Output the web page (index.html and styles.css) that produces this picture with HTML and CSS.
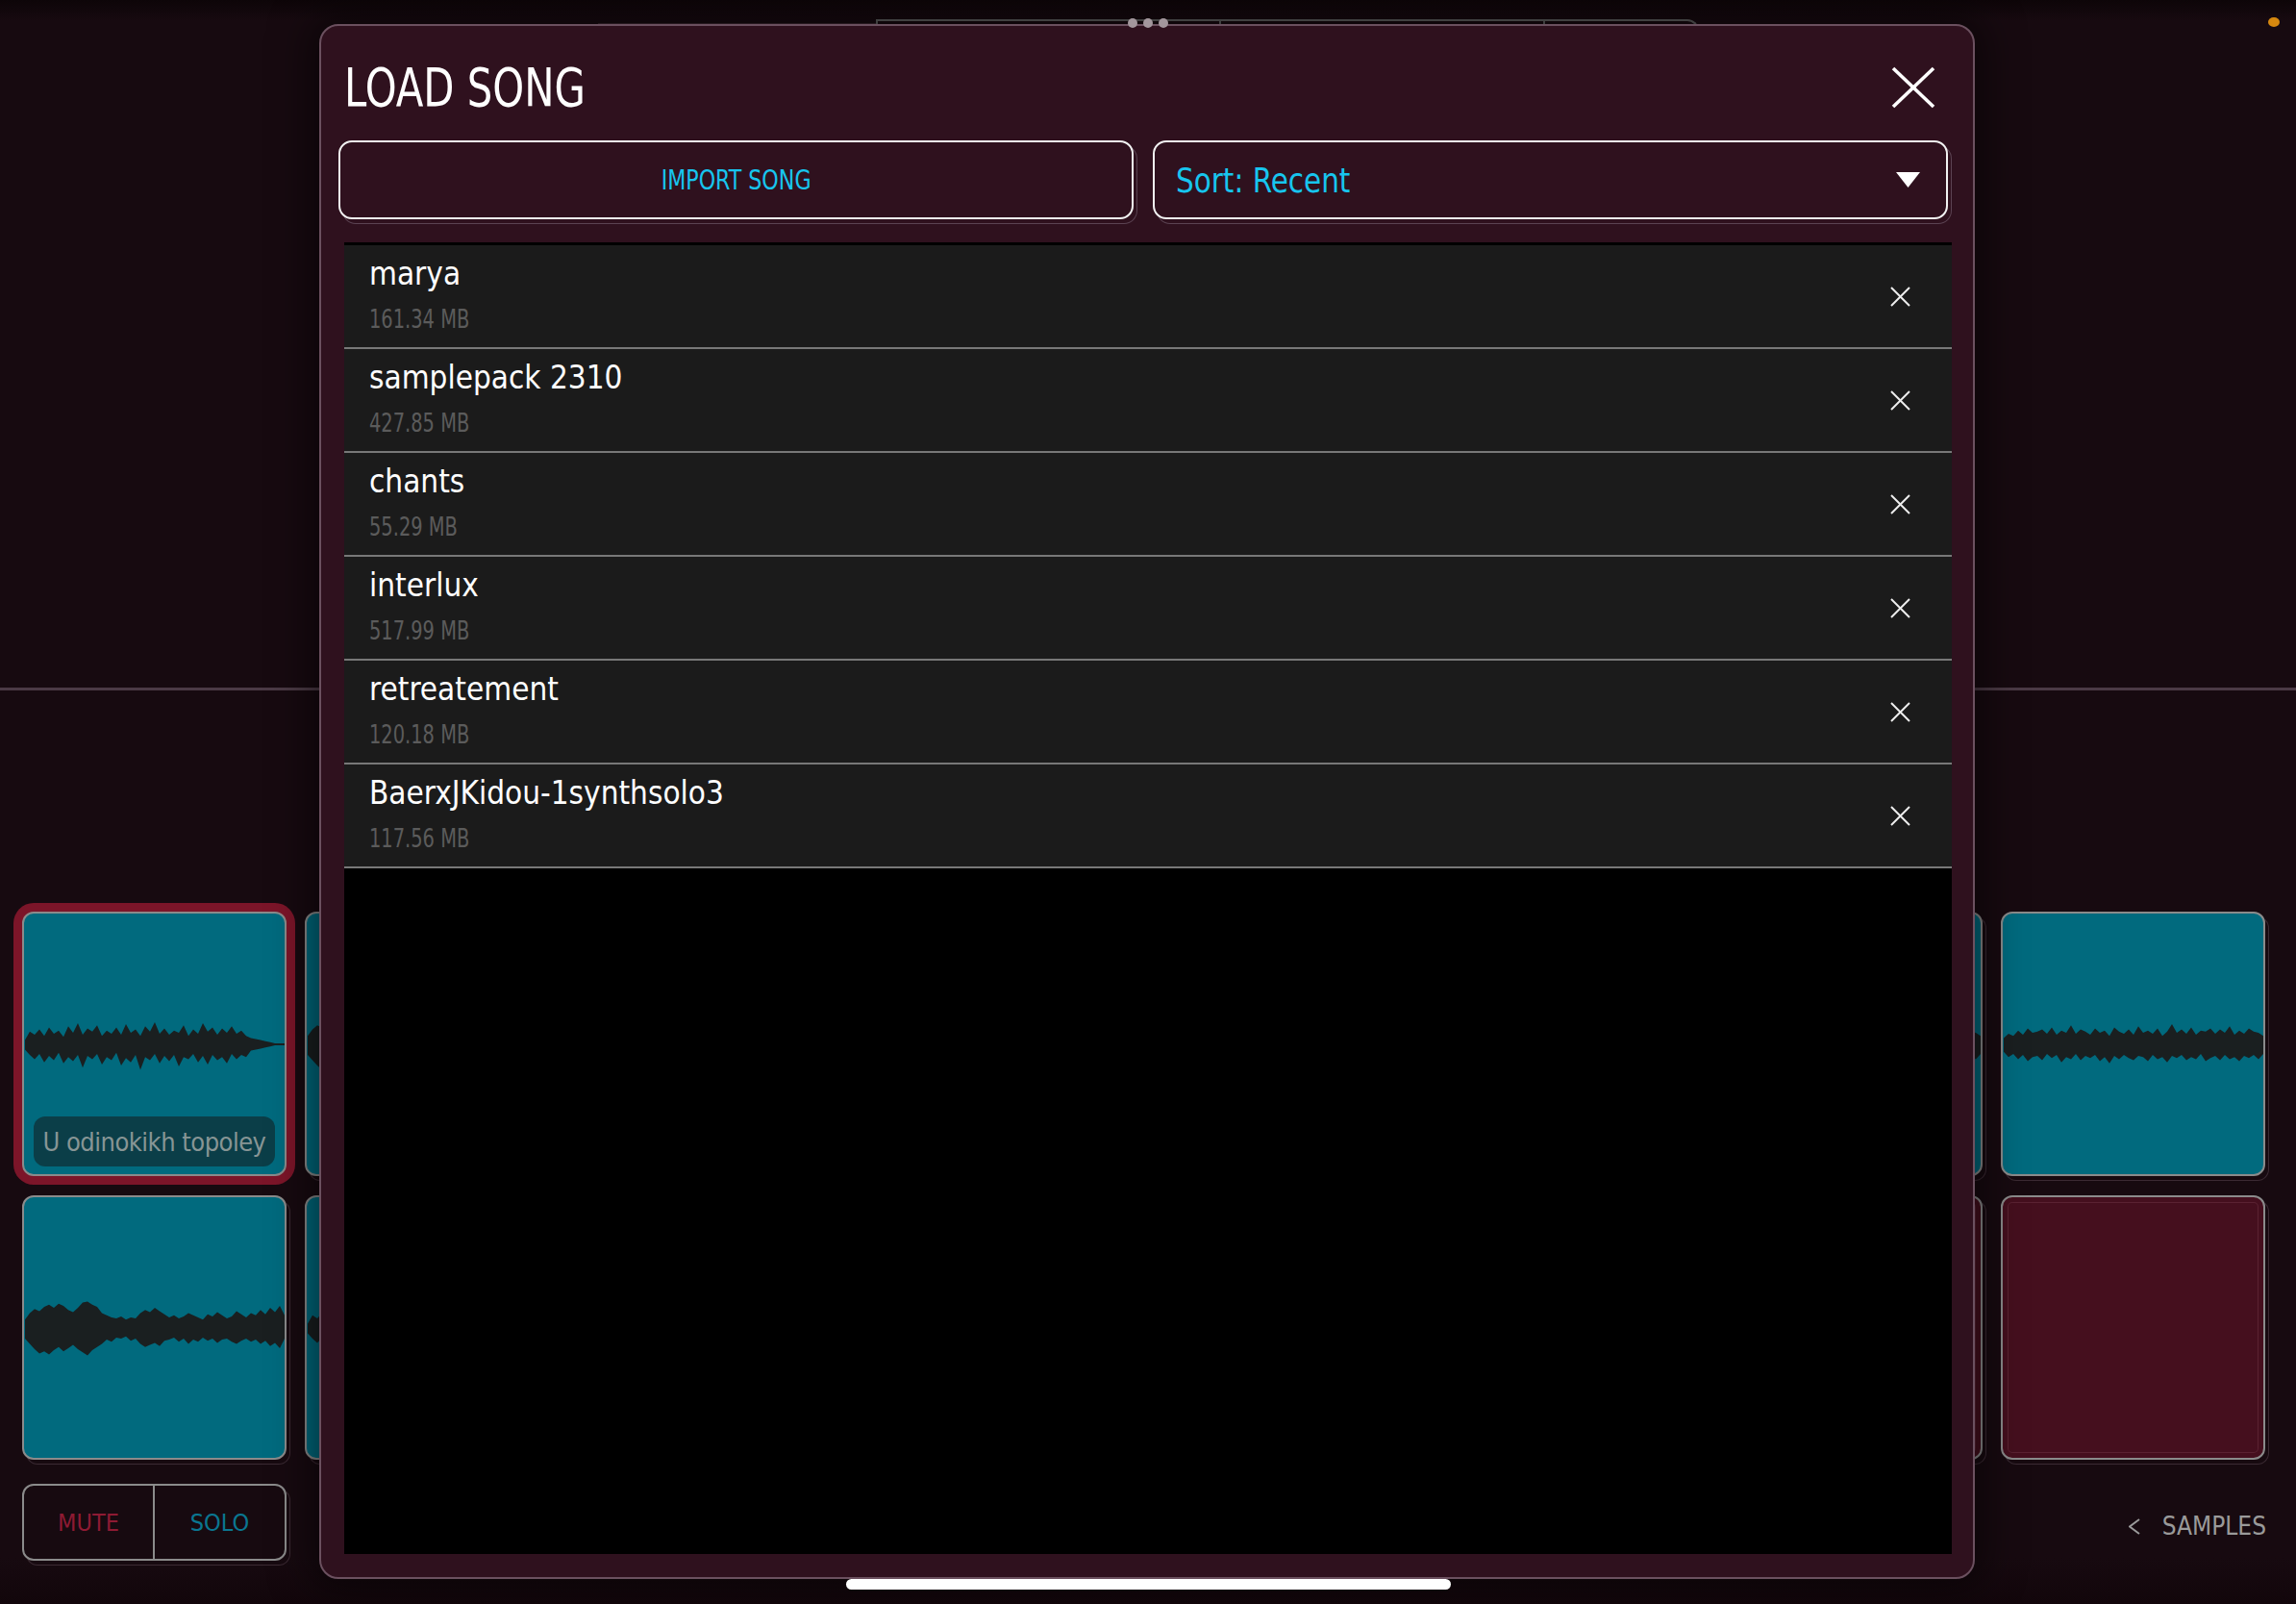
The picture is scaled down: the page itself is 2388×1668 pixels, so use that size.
FILE: index.html
```html
<!DOCTYPE html>
<html lang="en">
<head>
<meta charset="utf-8">
<title>Load Song</title>
<link rel="stylesheet" href="styles.css">
</head>
<body>
<svg class="defs" width="0" height="0" aria-hidden="true">
  <defs>
    <path id="w1" d="M0 26 L5 18 L10 21 L15 16 L20 22 L25 14 L30 20 L35 17 L40 23 L45 13 L50 19 L55 10 L60 21 L65 15 L70 18 L75 12 L80 22 L85 17 L90 20 L95 14 L100 21 L105 11 L110 19 L115 16 L120 22 L125 13 L130 18 L135 9 L140 20 L145 15 L150 21 L155 17 L160 19 L165 12 L170 22 L175 16 L180 20 L185 10 L190 18 L195 14 L200 21 L205 15 L210 19 L215 13 L220 20 L225 17 L230 22 L235 24 L240 25 L245 26 L250 27 L255 28 L260 29 L265 29 L270 29 L270 31 L265 31 L260 31 L255 32 L250 33 L245 34 L240 35 L235 36 L230 42 L225 40 L220 44 L215 39 L210 48 L205 42 L200 45 L195 40 L190 49 L185 41 L180 47 L175 39 L170 44 L165 42 L160 51 L155 40 L150 46 L145 41 L140 48 L135 39 L130 45 L125 42 L120 54 L115 40 L110 47 L105 43 L100 50 L95 38 L90 45 L85 42 L80 49 L75 39 L70 44 L65 41 L60 52 L55 40 L50 46 L45 42 L40 48 L35 38 L30 45 L25 41 L20 47 L15 39 L10 44 L5 40 L0 35 Z"/>
    <path id="w2" d="M0 22 L5 16 L10 12 L15 14 L20 10 L25 8 L30 11 L35 7 L40 9 L45 13 L50 15 L55 11 L60 6 L65 5 L70 8 L75 10 L80 16 L85 18 L90 20 L95 21 L100 19 L105 22 L110 20 L115 21 L120 16 L125 13 L130 15 L135 11 L140 14 L145 17 L150 20 L155 18 L160 21 L165 19 L170 16 L175 18 L180 20 L185 22 L190 17 L195 19 L200 15 L205 18 L210 21 L215 19 L220 14 L225 17 L230 20 L235 16 L240 18 L245 13 L250 17 L255 11 L260 15 L265 9 L270 18 L270 40 L265 49 L260 44 L255 47 L250 42 L245 45 L240 41 L235 43 L230 40 L225 42 L220 45 L215 43 L210 40 L205 41 L200 44 L195 40 L190 42 L185 39 L180 43 L175 41 L170 45 L165 40 L160 43 L155 39 L150 41 L145 42 L140 47 L135 44 L130 46 L125 48 L120 45 L115 40 L110 42 L105 38 L100 40 L95 39 L90 43 L85 41 L80 45 L75 48 L70 51 L65 56 L60 53 L55 50 L50 46 L45 49 L40 52 L35 48 L30 51 L25 55 L20 52 L15 54 L10 50 L5 45 L0 40 Z"/>
    <path id="w3" d="M0 24 L5 20 L10 22 L15 17 L20 21 L25 15 L30 19 L35 18 L40 16 L45 20 L50 14 L55 21 L60 17 L65 19 L70 12 L75 20 L80 16 L85 18 L90 21 L95 15 L100 19 L105 17 L110 22 L115 14 L120 18 L125 20 L130 16 L135 21 L140 13 L145 19 L150 17 L155 20 L160 15 L165 22 L170 18 L175 11 L180 19 L185 16 L190 20 L195 14 L200 21 L205 17 L210 18 L215 15 L220 20 L225 16 L230 19 L235 13 L240 21 L245 17 L250 20 L255 15 L260 18 L265 19 L270 22 L270 39 L265 44 L260 40 L255 43 L250 41 L245 46 L240 42 L235 44 L230 40 L225 45 L220 41 L215 43 L210 46 L205 39 L200 44 L195 42 L190 45 L185 40 L180 43 L175 41 L170 47 L165 42 L160 44 L155 40 L150 46 L145 42 L140 41 L135 45 L130 43 L125 40 L120 44 L115 41 L110 48 L105 42 L100 46 L95 40 L90 43 L85 41 L80 45 L75 39 L70 44 L65 42 L60 47 L55 40 L50 43 L45 39 L40 45 L35 41 L30 42 L25 46 L20 40 L15 44 L10 39 L5 42 L0 37 Z"/>
    <g id="xs"><line x1="1" y1="1" x2="20" y2="20"/><line x1="20" y1="1" x2="1" y2="20"/></g>
  </defs>
</svg>

<div class="app">
  <div class="topbar">
    <div class="seg"></div>
    <div class="tabs"><div class="tab t1"></div><div class="tab t2"></div></div>
  </div>
  <div class="hline"></div>

  <div class="pads">
    <div class="pad selected">
      <svg class="wave" viewBox="0 0 270 60" preserveAspectRatio="none"><use href="#w1"/></svg>
      <div class="pad-label">U odinokikh topoley</div>
    </div>
    <div class="pad"><svg class="wave" viewBox="0 0 270 60" preserveAspectRatio="none"><use href="#w2"/></svg></div>
    <div class="pad"></div>
    <div class="pad"></div>
    <div class="pad"></div>
    <div class="pad"></div>
    <div class="pad"><svg class="wave" viewBox="0 0 270 60" preserveAspectRatio="none"><use href="#w3"/></svg></div>
    <div class="pad"><svg class="wave" viewBox="0 0 270 60" preserveAspectRatio="none"><use href="#w3"/></svg></div>

    <div class="pad"><svg class="wave" viewBox="0 0 270 60" preserveAspectRatio="none"><use href="#w2"/></svg></div>
    <div class="pad"><svg class="wave" viewBox="0 0 270 60" preserveAspectRatio="none"><use href="#w1"/></svg></div>
    <div class="pad"></div>
    <div class="pad"></div>
    <div class="pad"></div>
    <div class="pad"></div>
    <div class="pad empty"></div>
    <div class="pad empty"></div>
  </div>

  <div class="bottom">
    <div class="ms"><span class="mute">MUTE</span><span class="solo">SOLO</span></div>
    <div class="samples">
      <svg class="chev" viewBox="0 0 12 17"><polyline points="11,1 1,8.5 11,16"/></svg>
      <span>SAMPLES</span>
    </div>
  </div>
</div>

<div class="modal">
  <div class="modal-head">
    <h1 class="title"><span class="sq-title">LOAD SONG</span></h1>
    <svg class="close" viewBox="0 0 46 44"><line x1="2" y1="2" x2="44" y2="42"/><line x1="44" y1="2" x2="2" y2="42"/></svg>
  </div>
  <div class="actions">
    <div class="btn import"><span class="sq-btn">IMPORT SONG</span></div>
    <div class="btn sort"><span class="sq-sort">Sort: Recent</span><svg class="tri" viewBox="0 0 25 16"><polygon points="0,0 25,0 12.5,16"/></svg></div>
  </div>
  <div class="list">
    <div class="row"><div class="info"><div class="name">marya</div><div class="size"><span class="sq-size">161.34 MB</span></div></div><svg class="del" viewBox="0 0 21 21"><use href="#xs"/></svg></div>
    <div class="row"><div class="info"><div class="name">samplepack 2310</div><div class="size"><span class="sq-size">427.85 MB</span></div></div><svg class="del" viewBox="0 0 21 21"><use href="#xs"/></svg></div>
    <div class="row"><div class="info"><div class="name">chants</div><div class="size"><span class="sq-size">55.29 MB</span></div></div><svg class="del" viewBox="0 0 21 21"><use href="#xs"/></svg></div>
    <div class="row"><div class="info"><div class="name">interlux</div><div class="size"><span class="sq-size">517.99 MB</span></div></div><svg class="del" viewBox="0 0 21 21"><use href="#xs"/></svg></div>
    <div class="row"><div class="info"><div class="name">retreatement</div><div class="size"><span class="sq-size">120.18 MB</span></div></div><svg class="del" viewBox="0 0 21 21"><use href="#xs"/></svg></div>
    <div class="row"><div class="info"><div class="name">BaerxJKidou-1synthsolo3</div><div class="size"><span class="sq-size">117.56 MB</span></div></div><svg class="del" viewBox="0 0 21 21"><use href="#xs"/></svg></div>
  </div>
</div>

<div class="dots"><i></i><i></i><i></i></div>
<div class="rec-dot"></div>
<div class="home"></div>
</body>
</html>
```

FILE: styles.css
```css
* { box-sizing: border-box; margin: 0; padding: 0; }

html, body {
  width: 2388px;
  height: 1668px;
  overflow: hidden;
}

body {
  position: relative;
  background: linear-gradient(#0d0508 0, #170a10 22px, #170a10 1620px, #12060b 1668px);
  font-family: "DejaVu Sans Condensed", "DejaVu Sans", sans-serif;
  font-stretch: condensed;
  color: #fff;
}

.defs { position: absolute; width: 0; height: 0; }

.app {
  display: flex;
  flex-direction: column;
  height: 1668px;
}

/* ---------- top bar behind the sheet ---------- */
.topbar {
  height: 715px;
  display: flex;
  align-items: flex-start;
  padding: 20px 0 0 622px;
}
.seg {
  width: 289px;
  height: 2px;
  margin-top: 4px;
  background: #3a2630;
}
.tabs {
  width: 856px;
  height: 14px;
  display: flex;
  border: 2px solid #5e5e5e;
  border-bottom: none;
  border-top-right-radius: 12px;
}
.tab { height: 100%; border-right: 2px solid #5e5e5e; }
.t1 { width: 357px; }
.t2 { width: 337px; }

.hline {
  height: 3px;
  background: #4b3a45;
}

/* ---------- pads ---------- */
.pads {
  margin-top: 230px;
  padding-left: 23px;
  display: grid;
  grid-template-columns: repeat(8, 275px);
  grid-auto-rows: 275px;
  column-gap: 19px;
  row-gap: 20px;
}
.pad {
  border: 2px solid #8b8b8b;
  border-radius: 12px;
  background: #016a7e;
  box-shadow: 4px 5px 0 -1px #170a10, 4px 5px 0 0 #3b2a33;
  display: grid;
  grid-template-rows: 1fr auto 1fr;
  justify-items: center;
  align-items: center;
}
.pad.selected {
  box-shadow: 0 0 0 9px #7c1529;
}
.pad.empty {
  background: #450f1e;
  box-shadow: inset 0 0 0 5px #450f1e, inset 0 0 0 6px #5a2232, 4px 5px 0 -1px #170a10, 4px 5px 0 0 #3b2a33;
}
.wave {
  grid-row: 2;
  width: 270px;
  height: 66px;
  fill: #1a1f20;
}
.pad-label {
  grid-row: 3;
  align-self: end;
  justify-self: stretch;
  margin: 0 10px 8px;
  height: 52px;
  border-radius: 12px;
  background: #0b3e48;
  color: #879595;
  font-size: 27px;
  letter-spacing: -0.5px;
  display: flex;
  align-items: center;
  justify-content: center;
}

/* ---------- bottom row ---------- */
.bottom {
  margin-top: 25px;
  display: flex;
  align-items: center;
  justify-content: space-between;
  padding: 0 31px 0 23px;
}
.ms {
  width: 275px;
  height: 80px;
  display: flex;
  border: 2px solid #8b8b8b;
  border-radius: 12px;
  box-shadow: 4px 5px 0 -1px #170a10, 4px 5px 0 0 #3b2a33;
  font-size: 25px;
}
.ms span {
  display: flex;
  align-items: center;
  justify-content: center;
}
.mute {
  width: 136px;
  color: #8e1a33;
  border-right: 2px solid #8b8b8b;
}
.solo {
  flex: 1;
  color: #0a7690;
}
.samples {
  margin-top: 8px;
  display: flex;
  align-items: center;
  gap: 23px;
  color: #9a9a9a;
  font-size: 26px;
}
.chev {
  width: 12px;
  height: 17px;
  fill: none;
  stroke: #9a9a9a;
  stroke-width: 2;
}

/* ---------- modal sheet ---------- */
.modal {
  position: absolute;
  left: 332px;
  top: 25px;
  width: 1722px;
  height: 1617px;
  border: 2px solid #6b505f;
  border-radius: 20px;
  background: #2f111e;
  box-shadow: 0 0 40px 10px rgba(0, 0, 0, 0.5);
  padding: 0 22px 24px 24px;
  display: flex;
  flex-direction: column;
}
.modal-head {
  height: 119px;
  padding-top: 9px;
  display: flex;
  align-items: center;
  justify-content: space-between;
}
.title {
  font-weight: normal;
  font-size: 56px;
  line-height: 66px;
  color: #fff;
}
.sq-title {
  display: inline-block;
  transform: scaleX(0.83);
  transform-origin: left center;
}
.close {
  width: 46px;
  height: 44px;
  margin-right: 17px;
  stroke: #fff;
  stroke-width: 3.6;
}

.actions {
  height: 82px;
  margin: 0 4px 0 -6px;
  display: grid;
  grid-template-columns: 1fr 1fr;
  gap: 20px;
}
.btn {
  min-width: 0;
  border: 2px solid #f2f2f2;
  border-radius: 14px;
  box-shadow: 4px 5px 0 -1px #2f111e, 4px 5px 0 0 #5b4352;
  display: flex;
  align-items: center;
  color: #17c5ee;
}
.import {
  justify-content: center;
  font-size: 28px;
}
.sq-btn {
  display: inline-block;
  transform: scaleX(0.88);
}
.sort {
  justify-content: space-between;
  padding: 0 27px 0 22px;
  font-size: 36px;
}
.sq-sort {
  display: inline-block;
  transform: scaleX(0.91);
  transform-origin: left center;
}
.tri {
  width: 25px;
  height: 16px;
  fill: #fff;
}

.list {
  flex: 1;
  margin-top: 24px;
  padding-top: 3px;
  background: #000;
}
.row {
  height: 108px;
  background: #1b1b1b;
  border-bottom: 2px solid #787878;
  display: flex;
  align-items: center;
  padding: 0 43px 0 26px;
}
.info {
  flex: 1;
  align-self: flex-start;
  padding-top: 10px;
  display: flex;
  flex-direction: column;
}
.name {
  font-size: 33px;
  line-height: 40px;
  color: #fff;
}
.size {
  margin-top: 12px;
  font-size: 27px;
  line-height: 30px;
  color: #5b5b5b;
}
.sq-size {
  display: inline-block;
  transform: scaleX(0.8);
  transform-origin: left center;
}
.del {
  width: 21px;
  height: 21px;
  stroke: #efefef;
  stroke-width: 2;
}

/* ---------- system overlays ---------- */
.dots {
  position: absolute;
  left: 1173px;
  top: 19px;
  display: flex;
  gap: 6px;
}
.dots i {
  width: 10px;
  height: 10px;
  border-radius: 50%;
  background: #a3979d;
}
.rec-dot {
  position: absolute;
  left: 2359px;
  top: 18px;
  width: 12px;
  height: 10px;
  border-radius: 50%;
  background: #d6880f;
}
.home {
  position: absolute;
  left: 880px;
  top: 1642px;
  width: 629px;
  height: 11px;
  border-radius: 6px;
  background: #fff;
}
```
